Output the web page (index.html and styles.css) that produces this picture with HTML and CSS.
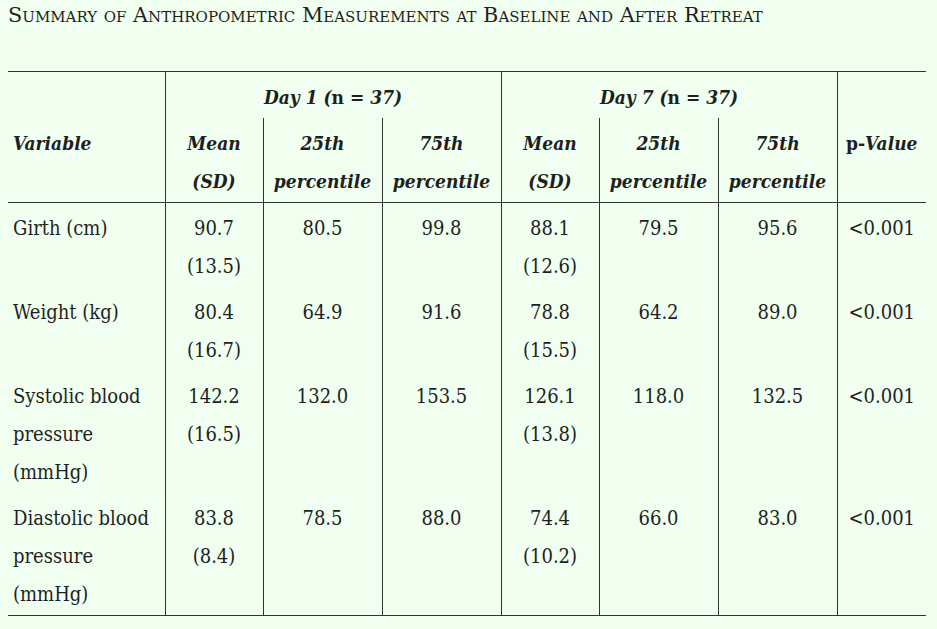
FILE: index.html
```html
<!DOCTYPE html>
<html>
<head>
<meta charset="utf-8">
<link rel="stylesheet" href="styles.css">
</head>
<body>
<h2 class="title">Summary of Anthropometric Measurements at Baseline and After Retreat</h2>
<table class="data">
<colgroup>
<col class="c-var"><col class="c-mean"><col class="c-pct"><col class="c-pct"><col class="c-mean"><col class="c-pct"><col class="c-pct"><col class="c-p">
</colgroup>
<thead>
<tr>
<th class="left"></th>
<th colspan="3" class="bl"><i>Day 1 (</i>n<i> = 37)</i></th>
<th colspan="3" class="bl"><i>Day 7 (</i>n<i> = 37)</i></th>
<th class="bl"></th>
</tr>
<tr>
<th class="left"><i>Variable</i></th>
<th class="bl"><i>Mean (SD)</i></th>
<th class="bl"><i>25th percentile</i></th>
<th class="bl"><i>75th percentile</i></th>
<th class="bl"><i>Mean (SD)</i></th>
<th class="bl"><i>25th percentile</i></th>
<th class="bl"><i>75th percentile</i></th>
<th class="bl">p-<i>Value</i></th>
</tr>
</thead>
<tbody>
<tr>
<td class="left">Girth (cm)</td>
<td class="bl">90.7 (13.5)</td><td class="bl">80.5</td><td class="bl">99.8</td>
<td class="bl">88.1 (12.6)</td><td class="bl">79.5</td><td class="bl">95.6</td>
<td class="bl">&lt;0.001</td>
</tr>
<tr>
<td class="left">Weight (kg)</td>
<td class="bl">80.4 (16.7)</td><td class="bl">64.9</td><td class="bl">91.6</td>
<td class="bl">78.8 (15.5)</td><td class="bl">64.2</td><td class="bl">89.0</td>
<td class="bl">&lt;0.001</td>
</tr>
<tr>
<td class="left">Systolic blood pressure (mmHg)</td>
<td class="bl">142.2 (16.5)</td><td class="bl">132.0</td><td class="bl">153.5</td>
<td class="bl">126.1 (13.8)</td><td class="bl">118.0</td><td class="bl">132.5</td>
<td class="bl">&lt;0.001</td>
</tr>
<tr>
<td class="left">Diastolic blood pressure (mmHg)</td>
<td class="bl">83.8 (8.4)</td><td class="bl">78.5</td><td class="bl">88.0</td>
<td class="bl">74.4 (10.2)</td><td class="bl">66.0</td><td class="bl">83.0</td>
<td class="bl">&lt;0.001</td>
</tr>
</tbody>
</table>
</body>
</html>
```
FILE: styles.css
```css
html, body {
  margin: 0;
  padding: 0;
  background: #f0fff0;
}
body {
  padding: 0 8px;
  color: #1f1f1f;
  font-family: "DejaVu Serif", "Liberation Serif", serif;
  font-stretch: condensed;
}
.title {
  margin: 0;
  height: 30px;
  line-height: 30px;
  font-size: 20.8px;
  font-weight: normal;
  font-variant: small-caps;
  font-stretch: normal;
}
.data {
  margin-top: 41px;
  width: 918px;
  table-layout: fixed;
  border-collapse: collapse;
  border-top: 1px solid #333;
  border-bottom: 1px solid #333;
  font-size: 20px;
  line-height: 38px;
}
.c-var { width: 157px; }
.c-mean { width: 98px; }
.c-pct { width: 119px; }
.c-p { width: 89px; }
.data th, .data td {
  padding: 6px 5px 2px;
  vertical-align: top;
  text-align: center;
}
.data th {
  font-weight: bold;
  font-size: 19px;
}
.data thead tr:last-child th {
  border-bottom: 1px solid #333;
}
.data .left {
  text-align: left;
}
.data .bl {
  border-left: 1px solid #333;
}
```
